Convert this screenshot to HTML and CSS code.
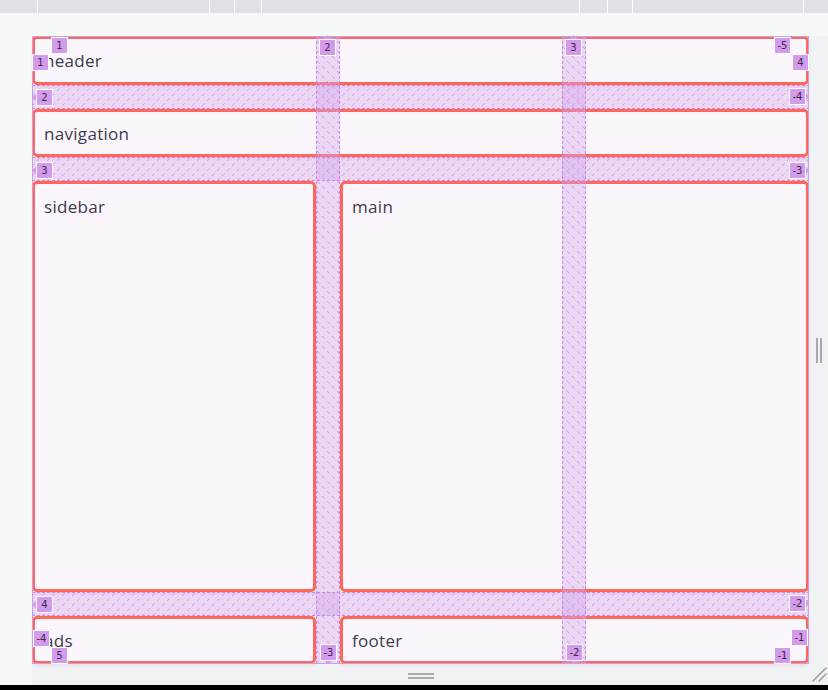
FILE: index.html
```html
<!DOCTYPE html>
<html lang="en">
<head>
<meta charset="utf-8">
<title>Grid layout</title>
<link rel="stylesheet" href="styles.css">
</head>
<body>
<div class="topbar">
  <div class="seg seg-a"></div><div class="seg seg-b"></div><div class="seg seg-c"></div><div class="seg seg-d"></div><div class="seg seg-e"></div><div class="seg seg-f"></div><div class="seg seg-g"></div><div class="seg seg-h"></div><div class="seg seg-i"></div>
</div>
<div class="canvas">
  <div class="frame">
    <div class="layout">
      <div class="item header">header</div>
      <div class="item nav">navigation</div>
      <div class="item sidebar tall">sidebar</div>
      <div class="item main tall">main</div>
      <div class="item ads">ads</div>
      <div class="item footer">footer</div>
      <svg class="overlay" width="777" height="628" viewBox="0 0 777 628" xmlns="http://www.w3.org/2000/svg">
        <defs>
          <pattern id="hatch-row" width="10" height="10" patternUnits="userSpaceOnUse">
            <path d="M0 10L2.6 7.4M5 5L7.6 2.4" stroke="#d29bee" stroke-width="1" fill="none"/>
          </pattern>
          <pattern id="hatch-col" width="10" height="10" patternUnits="userSpaceOnUse">
            <path d="M0 0L2.6 2.6M5 5L7.6 7.6" stroke="#d29bee" stroke-width="1" fill="none"/>
          </pattern>
        </defs>
        <g class="gaps-row">
          <rect x="0" y="49" width="777" height="24" fill="rgba(213,167,232,0.4)"/>
          <rect x="0" y="121" width="777" height="24" fill="rgba(213,167,232,0.4)"/>
          <rect x="0" y="556" width="777" height="24" fill="rgba(213,167,232,0.4)"/>
          <rect x="0" y="49" width="777" height="24" fill="url(#hatch-row)"/>
          <rect x="0" y="121" width="777" height="24" fill="url(#hatch-row)"/>
          <rect x="0" y="556" width="777" height="24" fill="url(#hatch-row)"/>
        </g>
        <g class="gaps-col">
          <rect x="284" y="0" width="24" height="628" fill="rgba(213,167,232,0.4)"/>
          <rect x="530" y="0" width="24" height="628" fill="rgba(213,167,232,0.4)"/>
          <rect x="284" y="0" width="24" height="628" fill="url(#hatch-col)"/>
          <rect x="530" y="0" width="24" height="628" fill="url(#hatch-col)"/>
        </g>
        <g stroke="#c98ae6" stroke-width="1" stroke-dasharray="3 2" fill="none">
          <path d="M0 49.5H777M0 72.5H777M0 121.5H777M0 144.5H777M0 556.5H777M0 579.5H777"/>
          <path d="M284.5 0V628M307.5 0V628M530.5 0V628M553.5 0V628"/>
        </g>
        <rect x="0.5" y="0.5" width="776" height="627" fill="none" stroke="#c9a0e2" stroke-width="1"/>
        <g class="labels">
          <path class="nub" d="M291 3.5L295.5 -1L300 3.5Z"/>
          <path class="nub" d="M537 3.5L541.5 -1L546 3.5Z"/>
          <path class="nub" d="M4.5 57L0 61.5L4.5 66Z"/>
          <path class="nub" d="M4.5 130L0 134.5L4.5 139Z"/>
          <path class="nub" d="M4.5 564L0 568.5L4.5 573Z"/>
          <path class="nub" d="M773.5 56L777 60.5L773.5 65Z"/>
          <path class="nub" d="M773.5 130L777 134.5L773.5 139Z"/>
          <path class="nub" d="M773.5 563L777 567.5L773.5 572Z"/>
          <path class="nub" d="M292 624.5L296.5 628L301 624.5Z"/>
          <path class="nub" d="M538 624.5L542.5 628L547 624.5Z"/>
          <path class="nub" d="M19.5 5L19.5 0L23 1.5Z"/>
          <path class="nub" d="M1 22L0 18L4 18.5Z"/>
          <path class="nub" d="M758.5 5L759 0L755 1.5Z"/>
          <path class="nub" d="M776 22L777 18L773 18.5Z"/>
          <path class="nub" d="M1.5 607L0 612L5 610.5Z"/>
          <path class="nub" d="M19.5 624L19.5 628L23 626.5Z"/>
          <path class="nub" d="M775.5 606L777 611L772 609.5Z"/>
          <path class="nub" d="M758.5 624L759 628L755 626.5Z"/>

          <rect class="lbl" x="19.5" y="1.5" width="16" height="16"/><text class="lbl-t" x="27.5" y="13">1</text>
          <rect class="lbl" x="0.5" y="18.5" width="16" height="16"/><text class="lbl-t" x="8.5" y="30">1</text>
          <rect class="lbl" x="287.5" y="3.5" width="16" height="16"/><text class="lbl-t" x="295.5" y="15">2</text>
          <rect class="lbl" x="533.5" y="3.5" width="16" height="16"/><text class="lbl-t" x="541.5" y="15">3</text>
          <rect class="lbl" x="742.5" y="1.5" width="16" height="16"/><text class="lbl-t" x="750.5" y="13">-5</text>
          <rect class="lbl" x="760.5" y="18.5" width="16" height="16"/><text class="lbl-t" x="768.5" y="30">4</text>
          <rect class="lbl" x="4.5" y="53.5" width="16" height="16"/><text class="lbl-t" x="12.5" y="65">2</text>
          <rect class="lbl" x="757.5" y="52.5" width="16" height="16"/><text class="lbl-t" x="765.5" y="64">-4</text>
          <rect class="lbl" x="4.5" y="126.5" width="16" height="16"/><text class="lbl-t" x="12.5" y="138">3</text>
          <rect class="lbl" x="757.5" y="126.5" width="16" height="16"/><text class="lbl-t" x="765.5" y="138">-3</text>
          <rect class="lbl" x="4.5" y="560.5" width="16" height="16"/><text class="lbl-t" x="12.5" y="572">4</text>
          <rect class="lbl" x="757.5" y="559.5" width="16" height="16"/><text class="lbl-t" x="765.5" y="571">-2</text>
          <rect class="lbl" x="1.5" y="594.5" width="16" height="16"/><text class="lbl-t" x="9.5" y="606">-4</text>
          <rect class="lbl" x="759.5" y="593.5" width="16" height="16"/><text class="lbl-t" x="767.5" y="605">-1</text>
          <rect class="lbl" x="288.5" y="608.5" width="16" height="16"/><text class="lbl-t" x="296.5" y="620">-3</text>
          <rect class="lbl" x="534.5" y="608.5" width="16" height="16"/><text class="lbl-t" x="542.5" y="620">-2</text>
          <rect class="lbl" x="19.5" y="611.5" width="16" height="16"/><text class="lbl-t" x="27.5" y="623">5</text>
          <rect class="lbl" x="742.5" y="611.5" width="16" height="16"/><text class="lbl-t" x="750.5" y="623">-1</text>
        </g>
      </svg>
    </div>
    <div class="rstrip"><span class="vbar"></span><span class="vbar"></span></div>
    <div class="bstrip"><span class="hbar"></span><span class="hbar"></span></div>
    <div class="corner">
      <svg class="grip" width="19" height="21" viewBox="0 0 19 21" xmlns="http://www.w3.org/2000/svg">
        <path d="M4 17L17 4M10 17L17 10" stroke="#9a9a9a" stroke-width="1.5" stroke-linecap="round" fill="none"/>
      </svg>
    </div>
  </div>
</div>
<div class="bottombar"></div>
</body>
</html>
```
FILE: styles.css
```css
* { box-sizing: border-box; }

html, body {
  margin: 0;
  width: 828px;
  height: 690px;
  overflow: hidden;
}

body {
  background: #f7f8f8;
  font-family: "Open Sans", "Liberation Sans", sans-serif;
}

.topbar {
  display: flex;
  height: 13px;
  background: #dee1e5;
}

.seg { height: 100%; border-left: 1px solid #ffffff; }
.seg:first-child { border-left: 0; }
.seg-a { width: 37px; }
.seg-b { width: 172px; }
.seg-c { width: 25px; }
.seg-d { width: 27px; }
.seg-e { width: 318px; }
.seg-f { width: 28px; }
.seg-g { width: 25px; }
.seg-h { width: 171px; }
.seg-i { width: 25px; }

.canvas {
  height: 672px;
  padding: 23px 0 0 32px;
}

.frame {
  display: grid;
  grid-template-columns: 777px 19px;
  grid-template-rows: 628px 21px;
  background: #f1f2f4;
}

.layout {
  position: relative;
  display: grid;
  grid-template-columns: 284px 222px 223px;
  grid-template-rows: 49px 48px 1fr 48px;
  gap: 24px;
  background: #fbf5fc;
}

.item {
  border: 3px solid #ff675b;
  border-radius: 5px;
  background: #fbf5fc;
  padding: 11px 8px 8px 9px;
  font-size: 17px;
  letter-spacing: 0.3px;
  line-height: 22px;
  color: #3c3b4b;
  box-shadow: 0 2px 3px rgba(90, 40, 90, 0.08);
}

.item.tall { padding-top: 12px; }

.header { grid-column: 1 / -1; grid-row: 1; }
.nav { grid-column: 1 / -1; grid-row: 2; }
.sidebar { grid-column: 1; grid-row: 3; }
.main { grid-column: 2 / 4; grid-row: 3; }
.ads { grid-column: 1; grid-row: 4; }
.footer { grid-column: 2 / 4; grid-row: 4; }

.overlay {
  position: absolute;
  left: 0;
  top: 0;
  overflow: visible;
  pointer-events: none;
}

.lbl {
  fill: #d39bec;
  stroke: #ffffff;
  stroke-width: 1;
}

.nub {
  fill: #d39bec;
}

.lbl-t {
  font-family: "DejaVu Sans", "Liberation Sans", sans-serif;
  font-size: 10px;
  fill: #3b2a48;
  text-anchor: middle;
}

.rstrip {
  display: flex;
  align-items: center;
  justify-content: center;
  gap: 2px;
}

.vbar {
  width: 2px;
  height: 25px;
  background: #aaaaaa;
}

.bstrip {
  display: flex;
  flex-direction: column;
  align-items: center;
  justify-content: center;
  gap: 2px;
  padding-top: 2px;
}

.hbar {
  width: 26px;
  height: 2px;
  background: #aaaaaa;
}

.corner {
  display: flex;
}

.grip { display: block; }

.bottombar {
  height: 5px;
  background: #000000;
}
```
